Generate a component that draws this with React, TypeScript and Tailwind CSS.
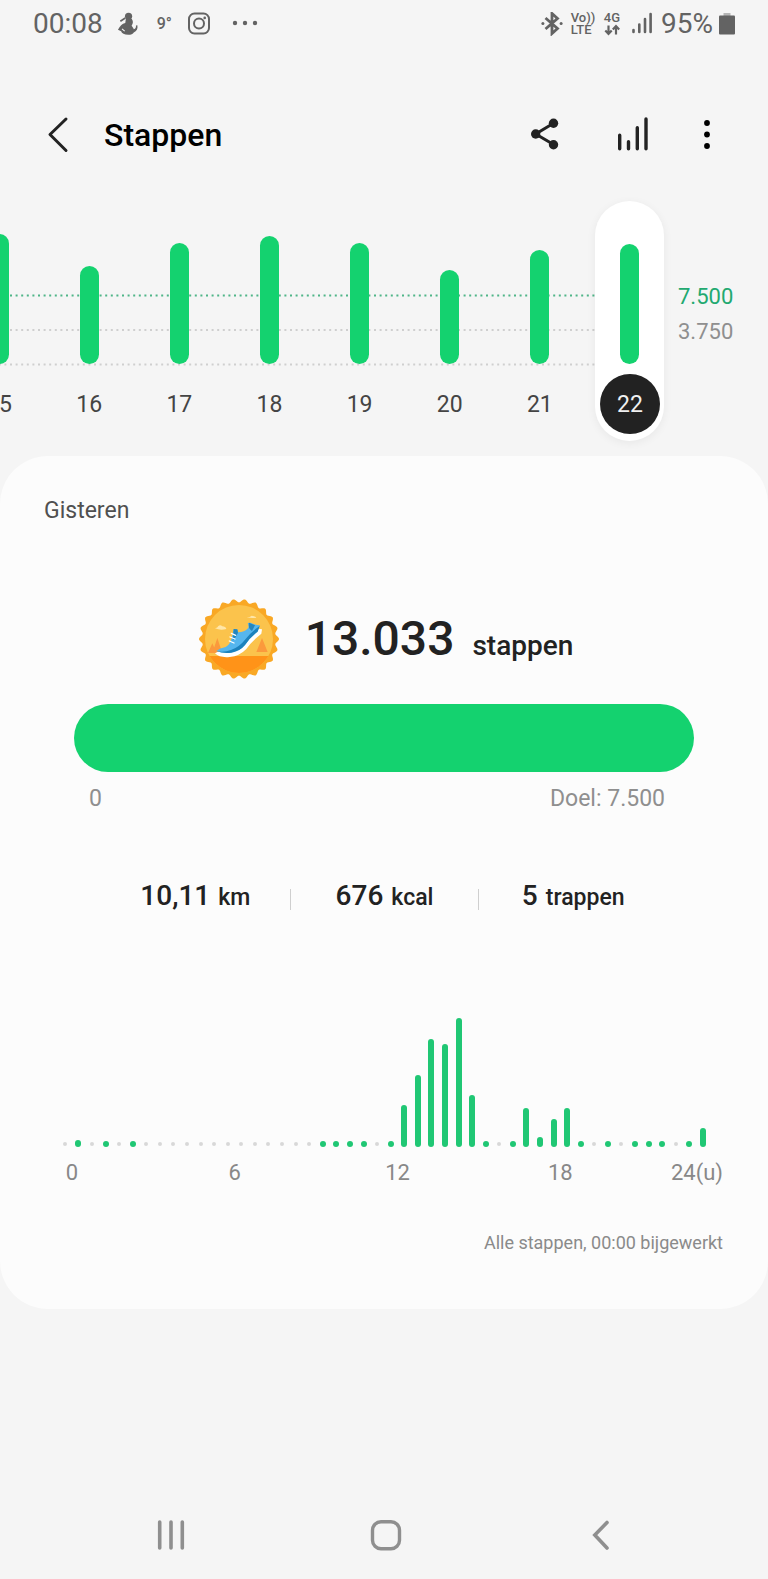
import { useState } from "react";

const week = [
  { day: 15, height: 130 },
  { day: 16, height: 98 },
  { day: 17, height: 121 },
  { day: 18, height: 128 },
  { day: 19, height: 121 },
  { day: 20, height: 94 },
  { day: 21, height: 114 },
  { day: 22, height: 120 },
];

// one value per half hour, 0 means no steps
const halfHours = [
  0, 7, 0, 6, 0, 6, 0, 0, 0, 0, 0, 0, 0, 0, 0, 0, 0, 0, 0, 6, 6, 6, 6, 0,
  6, 42, 72, 108, 103, 129, 52, 6, 0, 6, 39, 10, 28, 39, 6, 0, 6, 0, 6, 6, 6, 0, 6, 19,
];

const stats = [
  { value: "10,11", unit: "km" },
  { value: "676", unit: "kcal" },
  { value: "5", unit: "trappen" },
];

function sealPath(cx: number, cy: number, r: number, depth: number, teeth: number) {
  const points: string[] = [];
  const total = teeth * 12;
  for (let i = 0; i < total; i++) {
    const angle = (i / total) * Math.PI * 2;
    const radius = r + depth * Math.cos(angle * teeth);
    points.push(
      `${(cx + radius * Math.cos(angle)).toFixed(1)} ${(cy + radius * Math.sin(angle)).toFixed(1)}`
    );
  }
  return `M${points.join("L")}Z`;
}

const SEAL = sealPath(178, 177, 115, 5, 22);

function StatusBar() {
  return (
    <div className="flex h-12 items-center justify-between px-[33px] text-[#636363]">
      <div className="flex items-center">
        <span className="text-[28px] leading-8">00:08</span>
        <svg className="ml-[14px] h-6 w-[22px]" viewBox="0 0 20 22" fill="currentColor">
          <circle cx="10.5" cy="4" r="3.3" />
          <path d="M8 6.500h5.500c1.500 2 1.200 4-.2 6 1 1.200 1.800 2.400 2 3.400 1.600-.5 2.200-1.700 2-3.500l1.300-.3c.6 3.200-.7 5.500-3.300 6.600-.8 1.500-2.500 2.200-5 2.200-3.800 0-6-1.300-6.600-3.300L.8 16.300C2.600 12.500 4.500 10.600 7.500 10z" />
          <path d="M3 8.500 7.500 5.500" stroke="currentColor" strokeWidth="1.500" />
          <path d="m4.500 15.500 2.500 2" stroke="#f5f5f5" strokeWidth="1" />
        </svg>
        <span className="ml-[18px] flex w-4 items-start text-base font-medium leading-6">9°</span>
        <svg className="ml-[14px] h-6 w-6" viewBox="0 0 24 24" fill="none" stroke="currentColor">
          <rect x="2" y="1.500" width="20" height="20" rx="5.500" strokeWidth="2" />
          <circle cx="12" cy="11.500" r="5" strokeWidth="2" />
          <circle cx="17.700" cy="5.900" r="1.300" fill="currentColor" stroke="none" />
        </svg>
        <svg className="ml-5 h-6 w-7" viewBox="0 0 28 24" fill="currentColor">
          <circle cx="4" cy="11" r="2.200" />
          <circle cx="14" cy="11" r="2.200" />
          <circle cx="24" cy="11" r="2.200" />
        </svg>
      </div>
      <div className="flex items-center">
        <svg className="h-6 w-[22px]" viewBox="0 0 22 24" fill="none" stroke="currentColor" strokeWidth="2.800">
          <path d="m4.500 6 12 10.500-5.500 5V1.500l5.500 5-12 10.500" />
          <circle cx="1.900" cy="11.500" r="1.500" fill="currentColor" stroke="none" />
          <circle cx="20.100" cy="11.500" r="1.500" fill="currentColor" stroke="none" />
        </svg>
        <div className="ml-2 flex w-6 flex-col text-[13px] font-medium leading-3">
          <span>Vo))</span>
          <span>LTE</span>
        </div>
        <div className="ml-[9px] flex flex-col items-center text-[13px] font-medium leading-3">
          <span>4G</span>
          <svg className="h-3 w-4" viewBox="0 0 16 12" fill="none" stroke="currentColor" strokeWidth="2.200">
            <path d="M4.500 1.500v8M1.300 6.500l3.200 3.300 3.200-3.300M12 10.500v-8M8.800 5.500 12 2.200l3.200 3.300" />
          </svg>
        </div>
        <svg className="ml-3 h-6 w-5" viewBox="0 0 20 24" fill="none" stroke="currentColor" strokeWidth="2.600" strokeLinecap="round">
          <path d="M1.500 18v2M7.300 12.500v7.500M13 7v13M18.600 2v18" />
        </svg>
        <span className="ml-[9px] text-[28px] leading-8">95%</span>
        <svg className="ml-[6px] h-[22px] w-4" viewBox="0 0 16 22">
          <path d="M4.500 0h7v3h-7z" fill="#b5b5b5" />
          <rect y="2.500" width="16" height="19" rx="1" fill="currentColor" />
        </svg>
      </div>
    </div>
  );
}

function Header() {
  return (
    <header className="flex items-center pb-[45px] pl-9 pr-[38px] pt-16 text-[#222]">
      <button type="button" aria-label="Terug" className="flex h-11 w-11 cursor-pointer items-center justify-center">
        <svg className="h-11 w-11" viewBox="0 0 44 44" fill="none" stroke="currentColor" strokeWidth="3" strokeLinecap="round" strokeLinejoin="round">
          <path d="M30 7 14 22.500 30 38.500" />
        </svg>
      </button>
      <h1 className="ml-6 pt-[2px] text-[32px] font-medium leading-10 text-black">Stappen</h1>
      <div className="ml-auto flex items-center">
        <button type="button" aria-label="Delen" className="cursor-pointer">
          <svg className="h-11 w-11" viewBox="0 0 44 44" fill="currentColor">
            <path d="M30.500 11.300 12.700 22l17.800 10.500" fill="none" stroke="currentColor" strokeWidth="3" />
            <circle cx="12.700" cy="22" r="4.700" />
            <circle cx="30.500" cy="11.300" r="4.700" />
            <circle cx="30.500" cy="32.700" r="4.700" />
          </svg>
        </button>
        <button type="button" aria-label="Statistieken" className="ml-11 cursor-pointer">
          <svg className="h-11 w-11" viewBox="0 0 44 44" fill="none" stroke="currentColor" strokeWidth="3.400" strokeLinecap="round">
            <path d="M8.700 23.200v13.600M17.500 29.800v7M26.300 15.700v21.100M35 7v29.800" />
          </svg>
        </button>
        <button type="button" aria-label="Meer opties" className="ml-[31px] cursor-pointer">
          <svg className="h-11 w-11" viewBox="0 0 44 44" fill="#000">
            <circle cx="21" cy="11" r="2.900" />
            <circle cx="21" cy="22.500" r="2.900" />
            <circle cx="21" cy="34" r="2.900" />
          </svg>
        </button>
      </div>
    </header>
  );
}

function WeekChart() {
  const [selected, setSelected] = useState(22);

  return (
    <section className="-ml-[46px] flex">
      <div className="relative flex flex-1">
        <svg className="absolute left-0 top-0 h-full w-[calc(100%-45px)]" fill="none" strokeWidth="2" strokeDasharray="2 3.6">
          <line x1="0" x2="100%" y1="94.500" y2="94.500" stroke="#4fb588" />
          <line x1="0" x2="100%" y1="129" y2="129" stroke="#cfcfcf" />
          <line x1="0" x2="100%" y1="163.500" y2="163.500" stroke="#cfcfcf" />
        </svg>
        {week.map(({ day, height }) => {
          const active = day === selected;
          return (
            <div key={day} className="relative flex flex-1 justify-center">
              <button
                type="button"
                aria-pressed={active}
                onClick={() => setSelected(day)}
                className={`flex h-60 w-[69px] cursor-pointer flex-col items-center justify-end gap-[10px] rounded-full pb-[7px] ${
                  active ? "bg-white shadow-[0_2px_10px_rgba(0,0,0,0.06)]" : ""
                }`}
              >
                <span className="w-[19px] rounded-full bg-[#14d26f]" style={{ height }} />
                <span
                  className={`flex h-[60px] w-[60px] items-center justify-center rounded-full pt-[2px] text-[23px] ${
                    active ? "bg-[#222] text-[#f0f0f0]" : "text-[#444]"
                  }`}
                >
                  {day}
                </span>
              </button>
            </div>
          );
        })}
      </div>
      <div className="flex w-[93px] flex-col pl-[3px] pt-[78px] text-[22px] leading-[35px]">
        <span className="text-[#22a970]">7.500</span>
        <span className="text-[#8f8f8f]">3.750</span>
      </div>
    </section>
  );
}

function Badge() {
  return (
    <svg className="h-20 w-20" viewBox="58 57 240 240">
      <defs>
        <clipPath id="badge-inner">
          <circle cx="178" cy="177" r="102" />
        </clipPath>
      </defs>
      <path d={SEAL} fill="#f9a825" />
      <g clipPath="url(#badge-inner)">
        <path d="M70 70h216v216H70z" fill="#fbc34c" />
        <path d="M85 219 98 190l13 29zM98 219l15-45 15 45zM230 216l17-42 17 42z" fill="#fb9a3c" />
        <path d="M70 228h216v60H70z" fill="#ff9318" />
      </g>
      <path d="M106 145q8-1 10-7 6-5 12 1 10 0 12 8-18 5-34-2zM201 112q10 0 15-5 9 1 14 6-14 3-29-1z" fill="#ffe6a8" />
      <path d="M106 220q14 14 44 11 30-3 50-24 14-21 45-46l2-13-12-2-60 60-62 10z" fill="#fff" />
      <path d="M110 213q10-9 28-12 13-7 18-26l6-27 12 1 1 8q20 0 30-12 4-7-1-16l9-1q15 8 28 8l-7 17q-24 20-38 42-14 15-34 20-26 6-52-2z" fill="#55b6ee" />
      <path d="M110 213q22 5 44-3 26-10 42-31 17-22 44-41l-6 17q-24 18-38 40-14 18-40 23-26 4-46-5z" fill="#1d82bd" />
      <path d="m162 147 11 1 2 10q-6 16-16 24zM208 128l18 8-9 17q-13-8-9-25z" fill="#2586bd" />
      <path d="m155 160 13 6M151 171l15 6M149 183l14 6" stroke="#fff" strokeWidth="4" strokeLinecap="round" />
    </svg>
  );
}

function HourChart() {
  return (
    <div className="mt-[104px]">
      <div className="flex h-[129px] items-end px-[58px]">
        {halfHours.map((height, i) => (
          <div key={i} className="flex flex-1 justify-center">
            {height > 0 ? (
              <span className="w-[6px] rounded-full bg-[#20c774]" style={{ height }} />
            ) : (
              <span className="mb-px h-1 w-1 rounded-full bg-[#d8d8d8]" />
            )}
          </div>
        ))}
      </div>
      <div className="mt-3 flex pl-[72px] pr-[45px] text-[22px] leading-7 text-[#888]">
        {["0", "6", "12"].map((label) => (
          <div key={label} className="flex-1">
            <span className="flex w-0 justify-center">{label}</span>
          </div>
        ))}
        <div className="flex flex-1 justify-between">
          <span className="flex w-0 justify-center">18</span>
          <span>24(u)</span>
        </div>
      </div>
    </div>
  );
}

function DayCard() {
  return (
    <main className="mt-[15px] rounded-[48px] bg-[#fcfcfc] pb-[54px] pt-[41px]">
      <h2 className="px-11 text-[23px] leading-7 text-[#505050]">Gisteren</h2>

      <div className="mt-[74px] flex items-center justify-center pl-1">
        <Badge />
        <p className="ml-[26px] flex items-baseline gap-[18px] font-medium text-[#222]">
          <span className="text-[48px] leading-[56px]">13.033</span>
          <span className="text-[28px]">stappen</span>
        </p>
      </div>

      <div className="mt-[25px] px-[74px]">
        <div className="h-[68px] rounded-full bg-[#14d26f]" />
        <div className="mt-[13px] flex justify-between pl-[15px] pr-[29px] text-[23px] leading-7 text-[#8f8f8f]">
          <span>0</span>
          <span>Doel: 7.500</span>
        </div>
      </div>

      <div className="mt-[67px] flex px-[101px] font-medium text-[#222]">
        {stats.map(({ value, unit }, i) => (
          <div key={unit} className="flex flex-1 items-center">
            {i > 0 && <span className="mt-1 h-[21px] w-px bg-[#cfcfcf]" />}
            <p className="flex flex-1 items-baseline justify-center gap-2">
              <span className="text-[28px] leading-8">{value}</span>
              <span className="text-[23px] leading-8">{unit}</span>
            </p>
          </div>
        ))}
      </div>

      <HourChart />

      <p className="mt-11 pr-[45px] text-right text-lg leading-6 text-[#8a8a8a]">
        Alle stappen, 00:00 bijgewerkt
      </p>
    </main>
  );
}

function NavBar() {
  return (
    <nav className="mt-auto flex h-[88px] items-center justify-between px-[149px] text-[#8f8f8f]">
      <button type="button" aria-label="Recente apps" className="cursor-pointer">
        <svg className="h-11 w-11" viewBox="0 0 44 44" fill="none" stroke="currentColor" strokeWidth="3.600" strokeLinecap="round">
          <path d="M10.700 9v26M22 9v26M33.300 9v26" />
        </svg>
      </button>
      <button type="button" aria-label="Startscherm" className="cursor-pointer">
        <svg className="h-11 w-11" viewBox="0 0 44 44" fill="none" stroke="currentColor" strokeWidth="3.400">
          <rect x="10.500" y="8.700" width="27" height="27" rx="8.500" />
        </svg>
      </button>
      <button type="button" aria-label="Vorige" className="cursor-pointer">
        <svg className="h-11 w-11" viewBox="0 0 44 44" fill="none" stroke="currentColor" strokeWidth="3.600" strokeLinecap="round">
          <path d="M32 9.500 19.800 22 32 35" />
        </svg>
      </button>
    </nav>
  );
}

export default function App() {
  return (
    <div className="flex min-h-screen flex-col overflow-x-clip bg-[#f5f5f5] font-[Roboto,sans-serif]">
      <StatusBar />
      <Header />
      <WeekChart />
      <DayCard />
      <NavBar />
    </div>
  );
}
